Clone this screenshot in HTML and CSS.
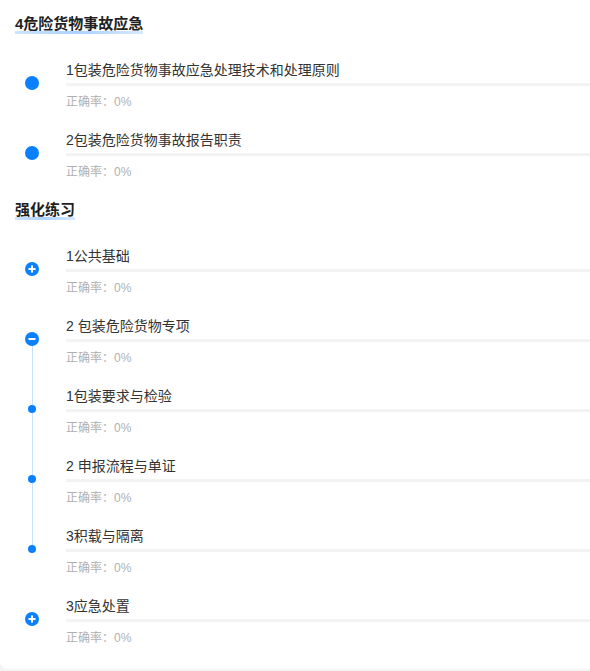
FILE: index.html
```html
<!DOCTYPE html>
<html lang="zh">
<head>
<meta charset="utf-8">
<link rel="stylesheet" href="styles.css">
</head>
<body>
<div class="card">
  <section class="section">
    <h2 class="heading"><span class="heading-text">4危险货物事故应急</span></h2>
    <div class="item">
      <div class="marker"><span class="dot"></span></div>
      <div class="content">
        <div class="title">1包装危险货物事故应急处理技术和处理原则</div>
        <div class="rule"></div>
        <div class="rate">正确率：0%</div>
      </div>
    </div>
    <div class="item">
      <div class="marker"><span class="dot"></span></div>
      <div class="content">
        <div class="title">2包装危险货物事故报告职责</div>
        <div class="rule"></div>
        <div class="rate">正确率：0%</div>
      </div>
    </div>
  </section>
  <section class="section">
    <h2 class="heading"><span class="heading-text">强化练习</span></h2>
    <div class="item">
      <div class="marker">
        <svg class="toggle" viewBox="0 0 14 14" width="14" height="14"><circle cx="7" cy="7" r="7" fill="#0a80ff"/><path d="M3.5 7h7M7 3.5v7" stroke="#fff" stroke-width="2" fill="none"/></svg>
      </div>
      <div class="content">
        <div class="title">1公共基础</div>
        <div class="rule"></div>
        <div class="rate">正确率：0%</div>
      </div>
    </div>
    <div class="item">
      <div class="marker line-down">
        <svg class="toggle" viewBox="0 0 14 14" width="14" height="14"><circle cx="7" cy="7" r="7" fill="#0a80ff"/><path d="M3.5 7h7" stroke="#fff" stroke-width="2" fill="none"/></svg>
      </div>
      <div class="content">
        <div class="title">2 包装危险货物专项</div>
        <div class="rule"></div>
        <div class="rate">正确率：0%</div>
      </div>
    </div>
    <div class="item">
      <div class="marker line-full"><span class="subdot"></span></div>
      <div class="content">
        <div class="title">1包装要求与检验</div>
        <div class="rule"></div>
        <div class="rate">正确率：0%</div>
      </div>
    </div>
    <div class="item">
      <div class="marker line-full"><span class="subdot"></span></div>
      <div class="content">
        <div class="title">2 申报流程与单证</div>
        <div class="rule"></div>
        <div class="rate">正确率：0%</div>
      </div>
    </div>
    <div class="item">
      <div class="marker line-up"><span class="subdot"></span></div>
      <div class="content">
        <div class="title">3积载与隔离</div>
        <div class="rule"></div>
        <div class="rate">正确率：0%</div>
      </div>
    </div>
    <div class="item">
      <div class="marker">
        <svg class="toggle" viewBox="0 0 14 14" width="14" height="14"><circle cx="7" cy="7" r="7" fill="#0a80ff"/><path d="M3.5 7h7M7 3.5v7" stroke="#fff" stroke-width="2" fill="none"/></svg>
      </div>
      <div class="content">
        <div class="title">3应急处置</div>
        <div class="rule"></div>
        <div class="rate">正确率：0%</div>
      </div>
    </div>
  </section>
</div>
</body>
</html>
```
FILE: styles.css
```css
html, body {
  margin: 0;
  padding: 0;
  background: #f4f4f4;
  overflow: hidden;
}
body {
  font-family: "Liberation Sans", "Noto Sans CJK SC", sans-serif;
  width: 590px;
  height: 671px;
}
.card {
  background: #fff;
  border-bottom-left-radius: 8px;
  padding-top: 8px;
  padding-bottom: 9px;
}
.heading {
  margin: 5px 0 19px 15px;
  font-size: 15px;
  line-height: 22px;
  font-weight: bold;
  color: #1f1f1f;
}
.heading-text {
  position: relative;
  display: inline-block;
  z-index: 0;
}
.heading-text::after {
  content: "";
  position: absolute;
  left: 0;
  right: 0;
  bottom: 1px;
  height: 3px;
  background: linear-gradient(90deg, rgba(90,165,255,0.3), rgba(90,165,255,0.5) 50%, rgba(90,165,255,0.25));
  z-index: -1;
}
.item {
  display: flex;
  height: 70px;
}
.marker {
  position: relative;
  width: 64px;
  flex: none;
  display: flex;
  justify-content: center;
  align-items: flex-start;
}
.dot {
  width: 14px;
  height: 14px;
  border-radius: 50%;
  background: #0a80ff;
  margin-top: 22px;
}
.toggle {
  display: block;
  margin-top: 22px;
  position: relative;
  z-index: 1;
}
.subdot {
  width: 8px;
  height: 8px;
  border-radius: 50%;
  background: #0a80ff;
  margin-top: 25px;
  position: relative;
  z-index: 1;
}
.line-down::before,
.line-full::before,
.line-up::before {
  content: "";
  position: absolute;
  left: 32px;
  width: 1px;
  background: #c6e0ff;
}
.line-down::before { top: 29px; bottom: 0; }
.line-full::before { top: 0; bottom: 0; }
.line-up::before { top: 0; height: 29px; }
.content {
  flex: 1;
  margin-left: 2px;
}
.title {
  margin-top: 5px;
  font-size: 14px;
  line-height: 22px;
  color: #333;
  white-space: nowrap;
}
.rule {
  margin-top: 2px;
  height: 3px;
  background: #f3f3f3;
}
.rate {
  margin-top: 6px;
  font-size: 12px;
  line-height: 20px;
  color: #b0b0b0;
}
```
